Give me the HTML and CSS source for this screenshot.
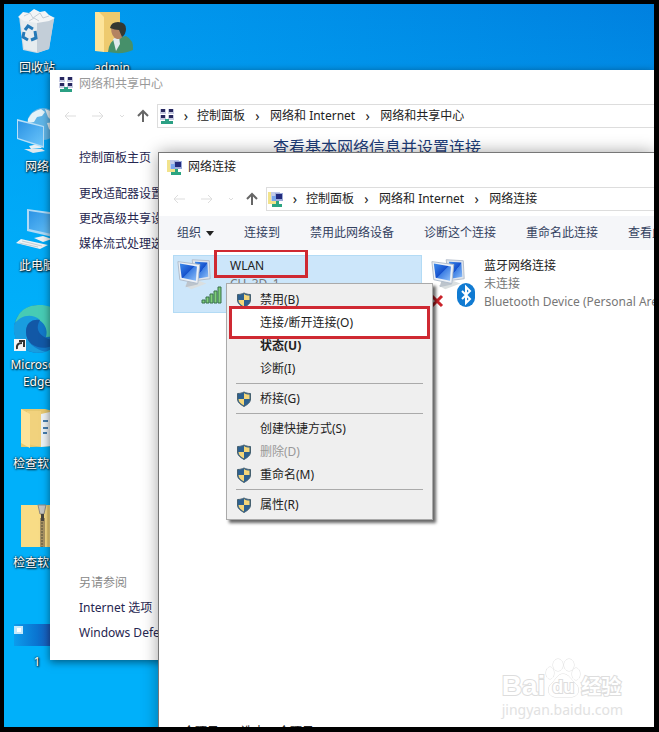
FILE: index.html
```html
<!DOCTYPE html>
<html lang="zh-CN">
<head>
    <meta charset="UTF-8">
    <meta name="viewport" content="width=device-width, initial-scale=1.0">
    <title>网络连接</title>
    <link rel="stylesheet" href="styles.css">
</head>
<body>
    <svg class="defs" aria-hidden="true">
        <linearGradient id="screen" x1="0" y1="0" x2="1" y2="1">
            <stop offset="0" stop-color="#3f8cec"/>
            <stop offset=".5" stop-color="#1550cc"/>
            <stop offset=".52" stop-color="#3f80e4"/>
            <stop offset="1" stop-color="#8fbff8"/>
        </linearGradient>
        <linearGradient id="sky" x1="0" y1="0" x2="1" y2="1">
            <stop offset="0" stop-color="#2a92e4"/>
            <stop offset="1" stop-color="#6cc6fb"/>
        </linearGradient>
        <symbol id="shield" viewBox="0 0 16 16">
            <path d="M8 1C6 2 4 2.500 1.500 2.500V8c0 3.500 3 5.500 6.500 7.500 3.500-2 6.500-4 6.500-7.500V2.500C12 2.500 10 2 8 1z" fill="#2d608f"/>
            <path d="M8 2v6h5.500V3.500C11.500 3.500 9.500 3 8 2zM8 8H2.500c0 3 2.500 4.700 5.500 6.500z" fill="#f4d679"/>
            <path d="M8 1C6 2 4 2.500 1.500 2.500V8c0 3.500 3 5.500 6.500 7.500 3.500-2 6.500-4 6.500-7.500V2.500C12 2.500 10 2 8 1z" fill="none" stroke="#45606f"/>
        </symbol>
        <symbol id="center" viewBox="0 0 16 16">
            <path d="M1 1h6v5H1zM9 1h6v5H9zM1 7h6v5H1zM9 7h6v5H9z" fill="#c7cbe2"/>
            <path d="M2 1h4v3H2zM10 1h4v3h-4zM2 7h4v3H2zM10 7h4v3h-4z" fill="#28285f"/>
            <path d="M6 11h4v2h4v3H2v-3h4z" fill="#2ba084"/>
        </symbol>
        <symbol id="connections" viewBox="0 0 16 16">
            <path d="M0 1h9v12H0z" fill="#f2e38c"/>
            <path d="M3 1h9v9H3z" fill="#c3cce9"/>
            <path d="M7 2h8v8H7z" fill="#9cabd9"/>
            <path d="M8 3h6v5H8z" fill="#222a7c"/>
            <path d="M4 5h4v5H4z" fill="#7aa6ec"/>
            <path d="M8 10h3v3h3v3H4v-3h4z" fill="#2ba581"/>
        </symbol>
        <symbol id="adapter" viewBox="0 0 40 34">
            <path d="M9 29l15-5 8 3-16 6z" fill="#dadfe0"/>
            <path d="M17 2l18 1 1 19-16 2z" fill="#dfe5ed" stroke="#b2bcc9"/>
            <path d="M20 4l13 1 1 15-12 2z" fill="url(#screen)"/>
            <path d="M12 24l8-1 3 5-13 3z" fill="#bcc4cc"/>
            <path d="M2 4l23 3-2 20L4 23z" fill="#edf1f6" stroke="#aebac9"/>
            <path d="M4 6l18 3-1 15L6 21z" fill="url(#screen)"/>
        </symbol>
    </svg>

    <div class="desktop">
        <div class="icons">
            <a class="shortcut" href="#">
                <svg viewBox="0 0 44 44">
                    <path d="M4 6l35 3-5 30-12 4-14-3z" fill="#d2dbe2"/>
                    <path d="M5 7l17 4v31L9 39z" fill="#e6ecef"/>
                    <path d="M22 11l17-3-5 31-12 4z" fill="#c3ced8"/>
                    <path d="M3 7l5-5 6 1 5-4 6 3 5-1 4 4 6 3-6 3-12 2-13-2z" fill="#f3f5f6"/>
                    <path d="M9 6l6-3 3 5 7-5 3 5 6-2M14 11l5-3 5 3" fill="none" stroke="#c4ced6"/>
                    <g fill="none" stroke="#2579b7" stroke-width="3">
                        <path d="M10 20l3-4 5 3"/>
                        <path d="M20 21l1 7-5 2"/>
                        <path d="M13 30l-5-3 1-5"/>
                    </g>
                </svg>
                <span>回收站</span>
            </a>
            <a class="shortcut" href="#">
                <svg viewBox="0 0 44 44">
                    <circle cx="28" cy="15" r="16" fill="#5fb4e6"/>
                    <path d="M13 10q4-8 13-10l4 3-3 4-5 1-3 5-6 1zM30 0l8 3 5 7-6 2-4-4zM32 14l7-1 4 4-3 8-6-5z" fill="#e4f2f8"/>
                    <path d="M14 37l9-2 4 4-11 1z" fill="#eaf0f3"/>
                    <path d="M9 40h18l3 2-12 2z" fill="#dfe8ee"/>
                    <path d="M2 10l27 7v22L2 30z" fill="#b9e0f7"/>
                    <path d="M3 12l25 6v19L3 29z" fill="url(#sky)"/>
                </svg>
                <span>网络</span>
            </a>
            <a class="shortcut" href="#">
                <svg viewBox="0 0 44 44">
                    <path d="M12 1l30 4v25l-30-7z" fill="#afdaf6"/>
                    <path d="M14 3l27 4v20l-27-6z" fill="url(#sky)"/>
                    <path d="M19 30l9-2 9 3-9 3zM6 31l27 6-8 4-24-6z" fill="#edf2f5"/>
                    <path d="M7 33l20 5M4 35l19 4" stroke="#c2cdd4"/>
                </svg>
                <span>此电脑</span>
            </a>
            <a class="shortcut" href="#">
                <svg viewBox="0 0 44 44">
                    <circle cx="23" cy="22" r="24" fill="#1279c9"/>
                    <path d="M0 16C4 2 14-2 25-2c14 0 22 9 22 20 0 8-7 12-16 12 3-9-4-20-17-19-6 0-11 2-14 5z" fill="#47cbb4"/>
                    <path d="M-1 18C5 8 17 6 25 13c-9-1-14 4-14 12 0 10 8 17 20 20C14 49-3 38-1 18z" fill="#199ddf"/>
                    <path d="M11 25c0-8 5-13 14-12-6 10 0 19 18 21-7 11-32 9-32-9z" fill="#1258a6"/>
                    <path d="M-1 32h12v12H-1z" fill="#f4f5f6"/>
                    <path d="M2 42q-1-6 5-6M4 34h5v6" fill="none" stroke="#333" stroke-width="2"/>
                </svg>
                <span>Microsoft Edge</span>
            </a>
            <a class="shortcut" href="#">
                <svg viewBox="0 0 44 44">
                    <path d="M6 3h24l12 3v34l-25 1H6z" fill="#e6c870"/>
                    <path d="M12 5h14v36l-14-3z" fill="#f1d27d"/>
                    <path d="M26 8l9-2v34l-9 1z" fill="#edf2f5"/>
                    <path d="M28 15h5M28 22h5M28 27h4" stroke="#467cad" stroke-width="2"/>
                    <path d="M6 3l9 5v34L6 37z" fill="#fce39a"/>
                </svg>
                <span>检查软件</span>
            </a>
            <a class="shortcut" href="#">
                <svg viewBox="0 0 44 44">
                    <path d="M6 0h38v42H6z" fill="#f8dc86"/>
                    <path d="M33 0v42" stroke="#dfba61"/>
                    <path d="M25 13h5v29h-5z" fill="#a99363"/>
                    <path d="M27 14v28" stroke="#7d704f" stroke-dasharray="2 1" stroke-width="2"/>
                    <path d="M23 0h8l-2 9h-4z" fill="#c5c4c0" stroke="#8e8a82"/>
                    <path d="M26 9h3v7h-3z" fill="#494641"/>
                </svg>
                <span>检查软件</span>
            </a>
            <a class="shortcut" href="#">
                <svg viewBox="0 0 44 44">
                    <linearGradient id="wallpaper">
                        <stop offset="0" stop-color="#0c9cec"/>
                        <stop offset=".5" stop-color="#0a74d0"/>
                        <stop offset=".8" stop-color="#1c58b8"/>
                    </linearGradient>
                    <path d="M-1 20h46v22H-1z" fill="url(#wallpaper)"/>
                    <path d="M-1 22h9v8h-9z" fill="#c6e9fb"/>
                    <path d="M2 24h4v4H2z" fill="#fff"/>
                </svg>
                <span>1</span>
            </a>
            <a class="shortcut" href="#">
                <svg viewBox="0 0 44 44">
                    <path d="M5 2h25v40H13z" fill="#eeca6e"/>
                    <path d="M5 2h4l5 5v35l-9-1z" fill="#fde49a"/>
                    <path d="M18 42q1-11 9-14l9-2q8 4 7 14-10 5-25 2z" fill="#46906a"/>
                    <path d="M23 29l6-3 1 8-4 7z" fill="#e1e9ed"/>
                    <path d="M21 17q0-4 7-4 7 2 6 9-1 8-7 7-6-2-6-12z" fill="#b38361"/>
                    <path d="M20 18q1-6 8-6 8 0 8 7 0 5-4 8l-3-7q-4 0-9-2z" fill="#343832"/>
                </svg>
                <span>admin</span>
            </a>
        </div>

        <section class="window window-center">
            <header class="titlebar inactive">
                <svg><use href="#center"/></svg>
                <h2>网络和共享中心</h2>
            </header>
            <nav class="navbar">
                <button class="nav-back" aria-label="后退" disabled><svg viewBox="0 0 14 14"><path d="M13 7H2M6 3L2 7l4 4"/></svg></button>
                <button class="nav-back" aria-label="前进" disabled><svg viewBox="0 0 14 14"><path d="M1 7h11M8 3l4 4-4 4"/></svg></button>
                <button class="nav-recent" aria-label="最近浏览的位置" disabled><svg viewBox="0 0 14 14"><path d="M5 6l2 2 2-2"/></svg></button>
                <button class="nav-up" aria-label="上移"><svg viewBox="0 0 14 14"><path d="M7 13V2M2 7l5-5 5 5"/></svg></button>
                <div class="address">
                    <svg><use href="#center"/></svg>
                    <i>›</i><a href="#">控制面板</a>
                    <i>›</i><a href="#">网络和 Internet</a>
                    <i>›</i><a href="#">网络和共享中心</a>
                </div>
            </nav>
            <div class="center-body">
                <aside class="sidebar">
                    <a class="home" href="#">控制面板主页</a>
                    <a href="#">更改适配器设置</a>
                    <a href="#">更改高级共享设置</a>
                    <a href="#">媒体流式处理选项</a>
                    <h3>另请参阅</h3>
                    <a href="#">Internet 选项</a>
                    <a href="#">Windows Defender 防火墙</a>
                </aside>
                <h1>查看基本网络信息并设置连接</h1>
            </div>
        </section>

        <section class="window window-connections">
            <header class="titlebar">
                <svg><use href="#connections"/></svg>
                <h2>网络连接</h2>
            </header>
            <nav class="navbar">
                <button class="nav-back" aria-label="后退" disabled><svg viewBox="0 0 14 14"><path d="M13 7H2M6 3L2 7l4 4"/></svg></button>
                <button class="nav-back" aria-label="前进" disabled><svg viewBox="0 0 14 14"><path d="M1 7h11M8 3l4 4-4 4"/></svg></button>
                <button class="nav-recent" aria-label="最近浏览的位置" disabled><svg viewBox="0 0 14 14"><path d="M5 6l2 2 2-2"/></svg></button>
                <button class="nav-up" aria-label="上移"><svg viewBox="0 0 14 14"><path d="M7 13V2M2 7l5-5 5 5"/></svg></button>
                <div class="address">
                    <svg><use href="#connections"/></svg>
                    <i>›</i><a href="#">控制面板</a>
                    <i>›</i><a href="#">网络和 Internet</a>
                    <i>›</i><a href="#">网络连接</a>
                </div>
            </nav>
            <div class="commands">
                <button>组织 <svg viewBox="0 0 8 5"><path d="M0 0h8L4 5z"/></svg></button>
                <button>连接到</button>
                <button>禁用此网络设备</button>
                <button>诊断这个连接</button>
                <button>重命名此连接</button>
                <button>查看此连接的状态</button>
            </div>
            <div class="connections">
                <article class="connection selected">
                    <div class="adapter">
                        <svg><use href="#adapter"/></svg>
                        <svg class="signal" viewBox="0 0 22 18"><path d="M1 14h3v3H1zM5 11h3v6H5zM9 8h3v9H9zM13 5h3v12h-3zM17 1h3v16h-3z" fill="#7fce7b" stroke="#39704b"/></svg>
                    </div>
                    <div class="details">
                        <h3 class="marked">WLAN</h3>
                        <p>CU_3D_1</p>
                    </div>
                </article>
                <article class="connection">
                    <div class="adapter">
                        <svg><use href="#adapter"/></svg>
                        <svg class="cross" viewBox="0 0 14 14"><path d="M2 2l10 10M12 2L2 12" stroke="#c92229" stroke-width="3"/></svg>
                        <svg class="bluetooth" viewBox="0 0 18 24"><rect width="18" height="24" rx="9" fill="#117bd2"/><path d="M5 8l8 8-4 4V4l4 4-8 8" fill="none" stroke="#fff" stroke-width="2"/></svg>
                    </div>
                    <div class="details">
                        <h3>蓝牙网络连接</h3>
                        <p>未连接</p>
                        <p>Bluetooth Device (Personal Area Network)</p>
                    </div>
                </article>
            </div>
            <footer class="statusbar"><span>3 个项目</span><span>选中 1 个项目</span></footer>

            <div class="menu" role="menu">
                <button role="menuitem"><svg><use href="#shield"/></svg>禁用(B)</button>
                <button role="menuitem" class="marked"><svg></svg>连接/断开连接(O)</button>
                <button role="menuitem" class="default"><svg></svg>状态(U)</button>
                <button role="menuitem"><svg></svg>诊断(I)</button>
                <hr>
                <button role="menuitem"><svg><use href="#shield"/></svg>桥接(G)</button>
                <hr>
                <button role="menuitem"><svg></svg>创建快捷方式(S)</button>
                <button role="menuitem" disabled><svg><use href="#shield"/></svg>删除(D)</button>
                <button role="menuitem"><svg><use href="#shield"/></svg>重命名(M)</button>
                <hr>
                <button role="menuitem"><svg><use href="#shield"/></svg>属性(R)</button>
            </div>
        </section>

        <div class="watermark">
            <div class="brand">
                <span>Bai</span>
                <div class="paw">
                    <svg viewBox="0 0 36 40">
                        <ellipse cx="5" cy="15" rx="4" ry="6"/>
                        <ellipse cx="13" cy="7" rx="5" ry="6"/>
                        <ellipse cx="24" cy="7" rx="5" ry="6"/>
                        <ellipse cx="31" cy="16" rx="4" ry="6"/>
                        <path d="M18 16c-6 0-7 6-11 9-5 4-5 13 3 14h17c8-1 8-10 3-14-4-3-6-9-12-9z"/>
                    </svg>
                    <b>du</b>
                </div>
                <span class="cn">经验</span>
            </div>
            <small>jingyan.baidu.com</small>
        </div>
    </div>
</body>
</html>
```
FILE: styles.css
```css
* {
    box-sizing: border-box;
}
body {
    margin: 0;
    font: 12px/18px "Noto Sans", "Noto Sans CJK SC", sans-serif;
    color: #222;
}
h1, h2, h3, p {
    margin: 0;
    font-size: 12px;
    font-weight: normal;
}
a {
    color: inherit;
    text-decoration: none;
}
button {
    padding: 0;
    border: 0;
    background: none;
    font: inherit;
    color: inherit;
}
svg {
    display: block;
    flex: none;
    width: 16px;
    height: 16px;
    overflow: visible;
}
.defs {
    position: absolute;
    width: 0;
    height: 0;
}

/* desktop */
.desktop {
    position: relative;
    height: 100vh;
    overflow: hidden;
    border: solid #000;
    border-width: 4px 5px 5px 4px;
    background: linear-gradient(to bottom, transparent, #00b0fa 45%), linear-gradient(to right, #009df1, #0080df);
}
.icons {
    display: grid;
    grid-template-rows: repeat(7, 99px);
    grid-template-columns: 66px 84px;
    grid-auto-flow: column;
    padding-top: 6px;
}
.shortcut {
    display: flex;
    flex-direction: column;
    align-items: center;
    gap: 5px;
    line-height: 17px;
    text-align: center;
    color: #fff;
    text-shadow: 1px 1px 2px #000, 0 0 2px #000;
}
.shortcut svg {
    width: 44px;
    height: 44px;
}

/* windows */
.window {
    position: absolute;
    right: 0;
    display: flex;
    flex-direction: column;
    background: #fff;
    white-space: nowrap;
}
.window-center {
    left: 46px;
    top: 66px;
    bottom: 67px;
    box-shadow: 0 2px 8px rgba(0, 0, 0, .5);
}
.window-connections {
    left: 155px;
    top: 149px;
    bottom: -14px;
    box-shadow: 0 0 0 1px #777, 0 0 16px rgba(0, 0, 0, .4);
}
.titlebar {
    display: flex;
    align-items: center;
    gap: 5px;
    height: 28px;
    padding-left: 8px;
}
.titlebar.inactive {
    color: #999;
}
.navbar {
    display: flex;
    align-items: center;
    height: 35px;
    padding-left: 6px;
}
.navbar button {
    display: flex;
    justify-content: center;
    width: 28px;
}
.navbar .nav-recent {
    width: 20px;
}
.navbar .nav-up {
    width: 22px;
    margin-right: 3px;
}
.navbar button svg {
    width: 14px;
    height: 14px;
    fill: none;
    stroke: #666;
    stroke-width: 2;
}
.navbar button:disabled svg {
    stroke: #ddd;
    stroke-width: 1;
}
.address {
    display: flex;
    flex: 1;
    align-items: center;
    height: 24px;
    padding-left: 1px;
    border: 1px solid #ddd;
    border-right: 0;
}
.address i {
    width: 25px;
    font-style: normal;
    font-size: 14px;
    text-align: center;
}
.address svg + i {
    width: 22px;
}

/* network center */
.center-body {
    display: flex;
    flex: 1;
}
.sidebar {
    display: flex;
    flex-direction: column;
    width: 223px;
    padding: 12px 0 15px 29px;
    line-height: 25px;
    color: #262650;
}
.sidebar .home {
    margin-bottom: 11px;
}
.sidebar h3 {
    margin-top: auto;
    color: #888;
}
.center-body h1 {
    padding-top: 2px;
    font-size: 16px;
    line-height: 24px;
    color: #1d3c78;
}

/* network connections */
.commands {
    display: flex;
    align-items: center;
    gap: 30px;
    height: 34px;
    padding-left: 18px;
    background: #f5f6f9;
    color: #33415f;
    overflow: hidden;
}
.commands button {
    display: flex;
    flex: none;
    align-items: center;
    gap: 5px;
}
.commands svg {
    width: 8px;
    height: 5px;
    fill: #222;
}
.connections {
    display: flex;
    flex: 1;
    align-items: flex-start;
    gap: 5px;
    padding: 5px 0 0 14px;
    overflow: hidden;
}
.connection {
    display: flex;
    flex: none;
    width: 249px;
    height: 58px;
    padding: 1px 2px;
    border: 1px solid transparent;
}
.connection.selected {
    border-color: #b3dbf5;
    background: #cce6fa;
}
.connection p {
    color: #777;
}
.adapter {
    position: relative;
    flex: none;
    width: 54px;
}
.adapter svg {
    width: 38px;
    height: 34px;
}
.adapter .signal {
    position: absolute;
    left: 25px;
    top: 29px;
    width: 22px;
    height: 18px;
}
.adapter .cross {
    position: absolute;
    left: 0;
    top: 37px;
    width: 14px;
    height: 14px;
}
.adapter .bluetooth {
    position: absolute;
    left: 27px;
    top: 26px;
    width: 18px;
    height: 24px;
}
.details .marked {
    position: relative;
    width: fit-content;
}
.details .marked::after {
    content: "";
    position: absolute;
    inset: -8px -44px -3px -16px;
    border: 3px solid #cf2932;
}
.statusbar {
    display: flex;
    gap: 22px;
    padding-left: 14px;
}

/* context menu */
.menu {
    position: absolute;
    left: 67px;
    top: 130px;
    display: flex;
    flex-direction: column;
    width: 207px;
    padding: 4px 9px 3px;
    border: 1px solid #aaa;
    background: #efefef;
    box-shadow: 3px 3px 3px rgba(0, 0, 0, .6);
}
.menu button {
    position: relative;
    display: flex;
    align-items: center;
    gap: 8px;
    height: 23px;
}
.menu button:disabled {
    color: #999;
}
.menu .default {
    font-weight: bold;
}
.menu .marked {
    z-index: 1;
}
.menu .marked::before {
    content: "";
    position: absolute;
    z-index: -1;
    inset: -5px -7px;
    border: 3px solid #cf2932;
    background: #fff;
}
.menu hr {
    width: 100%;
    margin: 3px 0;
    border: 0;
    border-top: 1px solid #aaa;
}

/* watermark */
.watermark {
    position: absolute;
    right: 31px;
    bottom: 9px;
    color: #fff;
    -webkit-text-stroke: 2px #ddd;
    paint-order: stroke;
}
.brand {
    display: flex;
    align-items: flex-end;
    font: bold 28px/24px "Liberation Sans", sans-serif;
}
.brand .cn {
    font: bold 20px/24px "Noto Sans CJK SC", sans-serif;
}
.paw {
    position: relative;
}
.paw svg {
    width: 36px;
    height: 40px;
    fill: #fff;
    stroke: #ddd;
}
.paw b {
    position: absolute;
    inset: 20px 0 0;
    font-size: 18px;
    line-height: 18px;
    text-align: center;
}
.watermark small {
    display: block;
    margin-top: 4px;
    font: 14px/16px "Noto Sans", sans-serif;
    color: #e2e2e2;
    -webkit-text-stroke: 0;
}
```
